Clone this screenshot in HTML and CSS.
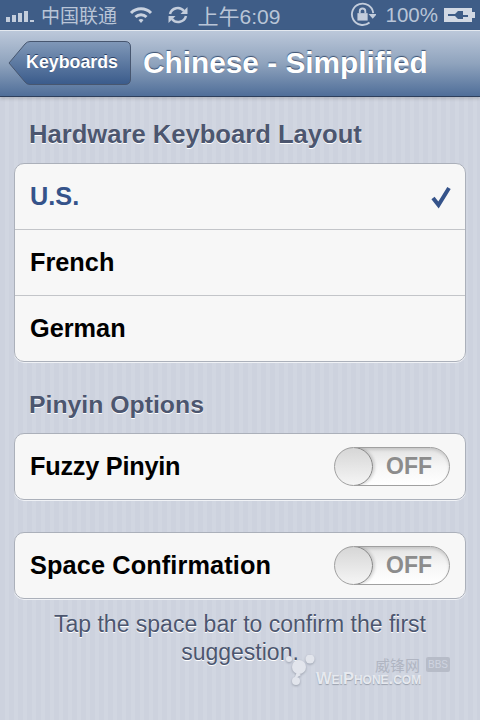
FILE: index.html
```html
<!DOCTYPE html>
<html lang="zh-CN">
<head>
  <meta charset="UTF-8">
  <title>Chinese - Simplified</title>
  <link rel="stylesheet" href="styles.css">
</head>
<body>

  <div class="status">
    <div class="status-side">
      <svg class="signal" width="30" height="12" viewBox="0 0 30 12">
        <rect x="0" y="7" width="4" height="5"/>
        <rect x="6" y="5" width="4" height="7"/>
        <rect x="12" y="3" width="4" height="9"/>
        <rect x="18" y="1" width="4" height="11"/>
        <rect x="24" y="10" width="4" height="2"/>
      </svg>
      <span class="carrier">中国联通</span>
      <svg class="wifi" width="24" height="18" viewBox="0 0 24 18">
        <path d="M2 7 A14 14 0 0 1 22 7" />
        <path d="M6.500 11 A8 8 0 0 1 17.500 11" />
        <path class="wifi-dot" d="M9.500 14 A4 4 0 0 1 14.500 14 L12 17 Z"/>
      </svg>
      <svg class="sync" width="22" height="20" viewBox="0 0 22 20">
        <path d="M3 9 A8 8 0 0 1 17 6"/>
        <path d="M19 11 A8 8 0 0 1 5 14"/>
        <path class="sync-head" d="M20.500 2 V9 H13.500 Z"/>
        <path class="sync-head" d="M1.500 18 V11 H8.500 Z"/>
      </svg>
    </div>
    <span class="time">上午6:09</span>
    <div class="status-side status-right">
      <svg class="lock" width="26" height="26" viewBox="0 0 28 28">
        <path class="lock-ring" d="M21 22 A11.500 11.500 0 1 1 25 12"/>
        <path class="lock-head" d="M20 13 H29 L24.500 18 Z"/>
        <rect class="lock-body" x="8" y="12" width="11" height="8"/>
        <path class="lock-shackle" d="M10.500 12 V10 A3 3 0 0 1 16.500 10 V12"/>
      </svg>
      <span class="battery-text">100%</span>
      <svg class="battery" width="32" height="16" viewBox="0 0 32 16">
        <path class="battery-shell" fill-rule="evenodd" d="M0 1 H28 V5 H31 V11 H28 V15 H0 Z M4 7 V9 H11 L14 12 H19 V10 H24 V8 H19 V6 V4 H14 L11 7 Z"/>
      </svg>
    </div>
  </div>

  <div class="nav">
    <div class="back">
      <svg class="back-shape" width="123" height="44" viewBox="0 0 123 44">
        <defs>
          <linearGradient id="backFill" x1="0" y1="0" x2="0" y2="1">
            <stop offset="0" stop-color="#8098b8"/>
            <stop offset="1" stop-color="#3a5b8b"/>
          </linearGradient>
        </defs>
        <path d="M1 22 L17 3 Q19 0.500 22 0.500 H117 Q122.500 0.500 122.500 6 V38 Q122.500 43.500 117 43.500 H22 Q19 43.500 17 41 Z"/>
      </svg>
      <span class="back-label">Keyboards</span>
    </div>
    <h1 class="nav-title">Chinese - Simplified</h1>
  </div>

  <div class="content">
    <h2 class="group-title">Hardware Keyboard Layout</h2>
    <div class="card">
      <div class="row selected">
        <span>U.S.</span>
        <svg class="check" width="22" height="24" viewBox="0 0 22 24">
          <path d="M3 13 L8.500 20 L19 3"/>
        </svg>
      </div>
      <div class="row">French</div>
      <div class="row">German</div>
    </div>

    <h2 class="group-title second">Pinyin Options</h2>
    <div class="card">
      <div class="row">
        <span class="tight">Fuzzy Pinyin</span>
        <div class="switch"><div class="knob"></div><span class="off">OFF</span></div>
      </div>
    </div>

    <div class="card third">
      <div class="row">
        <span class="wide">Space Confirmation</span>
        <div class="switch"><div class="knob"></div><span class="off">OFF</span></div>
      </div>
    </div>

    <p class="note">Tap the space bar to confirm the first suggestion.</p>
  </div>

  <div class="watermark">
    <svg class="wm-logo" width="30" height="30" viewBox="0 0 30 30">
      <circle cx="3" cy="4" r="3"/>
      <circle cx="24" cy="4" r="4.500"/>
      <circle cx="13" cy="12" r="7"/>
      <circle cx="10" cy="26" r="4"/>
      <path d="M11 17 L8 24 L15 20 Z"/>
    </svg>
    <div class="wm-text">
      <div class="wm-top"><span class="wm-cn">威锋网</span><span class="wm-badge">BBS</span></div>
      <div class="wm-en">WeiPhone.com</div>
    </div>
  </div>

</body>
</html>
```

FILE: styles.css
```css
* {
  box-sizing: border-box;
}

body {
  margin: 0;
  width: 480px;
  height: 720px;
  overflow: hidden;
  position: relative;
  font-family: "Liberation Sans", Arial, sans-serif;
  background-color: #cfd4e0;
  background-image: repeating-linear-gradient(90deg, #cdd2de 0, #cdd2de 5px, #d1d6e1 5px, #d1d6e1 9px);
}

/* status bar */
.status {
  height: 30px;
  background: #3f5d87;
  color: #b9c5d7;
  display: grid;
  grid-template-columns: 1fr auto 1fr;
  align-items: center;
  padding: 0 4px 0 6px;
}

.status-side {
  display: flex;
  align-items: center;
}

.status-right {
  justify-content: flex-end;
}

.signal {
  fill: #c3cddc;
  margin-top: 1px;
}

.carrier {
  font-family: "Noto Sans CJK SC", sans-serif;
  font-size: 19px;
  line-height: 30px;
  margin-left: 5px;
}

.wifi {
  margin-left: 12px;
  fill: none;
  stroke: #c9d2e0;
  stroke-width: 3;
}

.wifi-dot {
  fill: #c9d2e0;
  stroke: none;
}

.sync {
  margin-left: 14px;
  fill: none;
  stroke: #c3cddc;
  stroke-width: 2.500;
}

.sync-head {
  fill: #c3cddc;
  stroke: none;
}

.time {
  font-family: "Liberation Sans", "Noto Sans CJK SC", sans-serif;
  font-size: 21px;
  margin-right: 4px;
}

.lock {
  fill: none;
  stroke: #c3cddc;
  stroke-width: 2;
  margin-right: 10px;
}

.lock-head,
.lock-body {
  fill: #c3cddc;
  stroke: none;
}

.battery-text {
  font-size: 20.500px;
}

.battery {
  margin-left: 6px;
}

.battery-shell {
  fill: #d2d9e4;
}

/* nav bar */
.nav {
  height: 67px;
  border-top: 1px solid #e4e9f0;
  border-bottom: 1px solid #2d3f5c;
  background: linear-gradient(#bcc8da, #8fa3bd 50%, #4f6e99);
  display: flex;
  align-items: center;
  padding: 0 0 2px 8px;
  box-shadow: 0 2px 3px rgba(0, 0, 0, 0.15);
}

.back {
  width: 123px;
  height: 44px;
  position: relative;
  display: flex;
  align-items: center;
  justify-content: flex-end;
  padding-right: 13px;
}

.back-shape {
  position: absolute;
  left: 0;
  top: 0;
  fill: url(#backFill);
  stroke: #47566f;
  stroke-width: 1;
}

.back-label {
  position: relative;
  color: #fff;
  font-size: 17.800px;
  font-weight: bold;
  text-shadow: 0 -1px 0 #2c4266;
}

.nav-title {
  margin: 0 0 0 12px;
  color: #fff;
  font-size: 29.800px;
  font-weight: bold;
  text-shadow: 0 -1px 1px #3a4f70;
}

/* grouped list */
.content {
  padding: 22px 14px 0;
}

.group-title {
  margin: 0 0 14px 15px;
  height: 30px;
  line-height: 30px;
  color: #4c566f;
  font-size: 25.600px;
  font-weight: bold;
  text-shadow: 0 1px 0 #fff;
}

.group-title.second {
  margin-top: 28px;
  margin-bottom: 13px;
  font-size: 24.800px;
}

.card {
  background: #f7f7f7;
  border: 1px solid #abb0ba;
  border-radius: 10px;
  box-shadow: 0 1px 0 #f0f2f6;
}

.card.third {
  margin-top: 32px;
}

.row {
  height: 66px;
  padding: 0 15px;
  display: flex;
  align-items: center;
  justify-content: space-between;
  color: #000;
  font-size: 25.300px;
  font-weight: bold;
  border-top: 1px solid #c3c5c9;
}

.row:first-child {
  height: 65px;
  border-top: none;
}

.row.selected {
  color: #35538a;
  padding-right: 13px;
}

.tight {
  letter-spacing: -0.250px;
}

.wide {
  letter-spacing: 0.120px;
}

.check {
  fill: none;
  stroke: #35538a;
  stroke-width: 4;
}

.switch {
  width: 116px;
  height: 39px;
  position: relative;
  border: 1px solid #a0a0a0;
  border-radius: 20px;
  overflow: hidden;
  background: linear-gradient(#e2e2e2, #f6f6f6 50%, #fff);
  box-shadow: inset 0 2px 3px rgba(0, 0, 0, 0.12);
  display: flex;
  align-items: center;
  justify-content: flex-end;
  padding-right: 17px;
}

.knob {
  position: absolute;
  left: -1px;
  top: -1px;
  width: 39px;
  height: 39px;
  border: 1.500px solid #858585;
  border-radius: 50%;
  background: linear-gradient(#d6d6d6, #f5f5f5);
  box-shadow: 2px 0 3px rgba(0, 0, 0, 0.15);
}

.off {
  color: #8c8c8c;
  font-size: 23px;
  font-weight: bold;
}

.note {
  margin: 11px 10px 0;
  color: #4c566f;
  font-size: 23px;
  line-height: 28px;
  text-align: center;
  text-shadow: 0 1px 0 #fff;
}

/* watermark sits over the page */
.watermark {
  position: absolute;
  left: 286px;
  top: 655px;
  display: flex;
  fill: #e2e5ec;
  color: #e6e9ef;
}

.wm-logo {
  filter: drop-shadow(0 1px 1px #9aa0ad);
}

.wm-text {
  width: 134px;
  margin-top: 2px;
}

.wm-top {
  display: flex;
  justify-content: flex-end;
  align-items: center;
  gap: 6px;
  height: 15px;
  color: #b0b5c2;
}

.wm-cn {
  font-family: "Noto Sans CJK SC", sans-serif;
  font-size: 15px;
  line-height: 15px;
}

.wm-badge {
  width: 24px;
  height: 15px;
  font-size: 10px;
  line-height: 15px;
  text-align: center;
  border-radius: 2px;
  background: #b7bcc8;
  color: #cfd4e0;
}

.wm-en {
  font-size: 16.500px;
  font-weight: bold;
  font-variant: small-caps;
  line-height: 12px;
  text-shadow: 0 1px 1px #9aa0ad;
}
```
